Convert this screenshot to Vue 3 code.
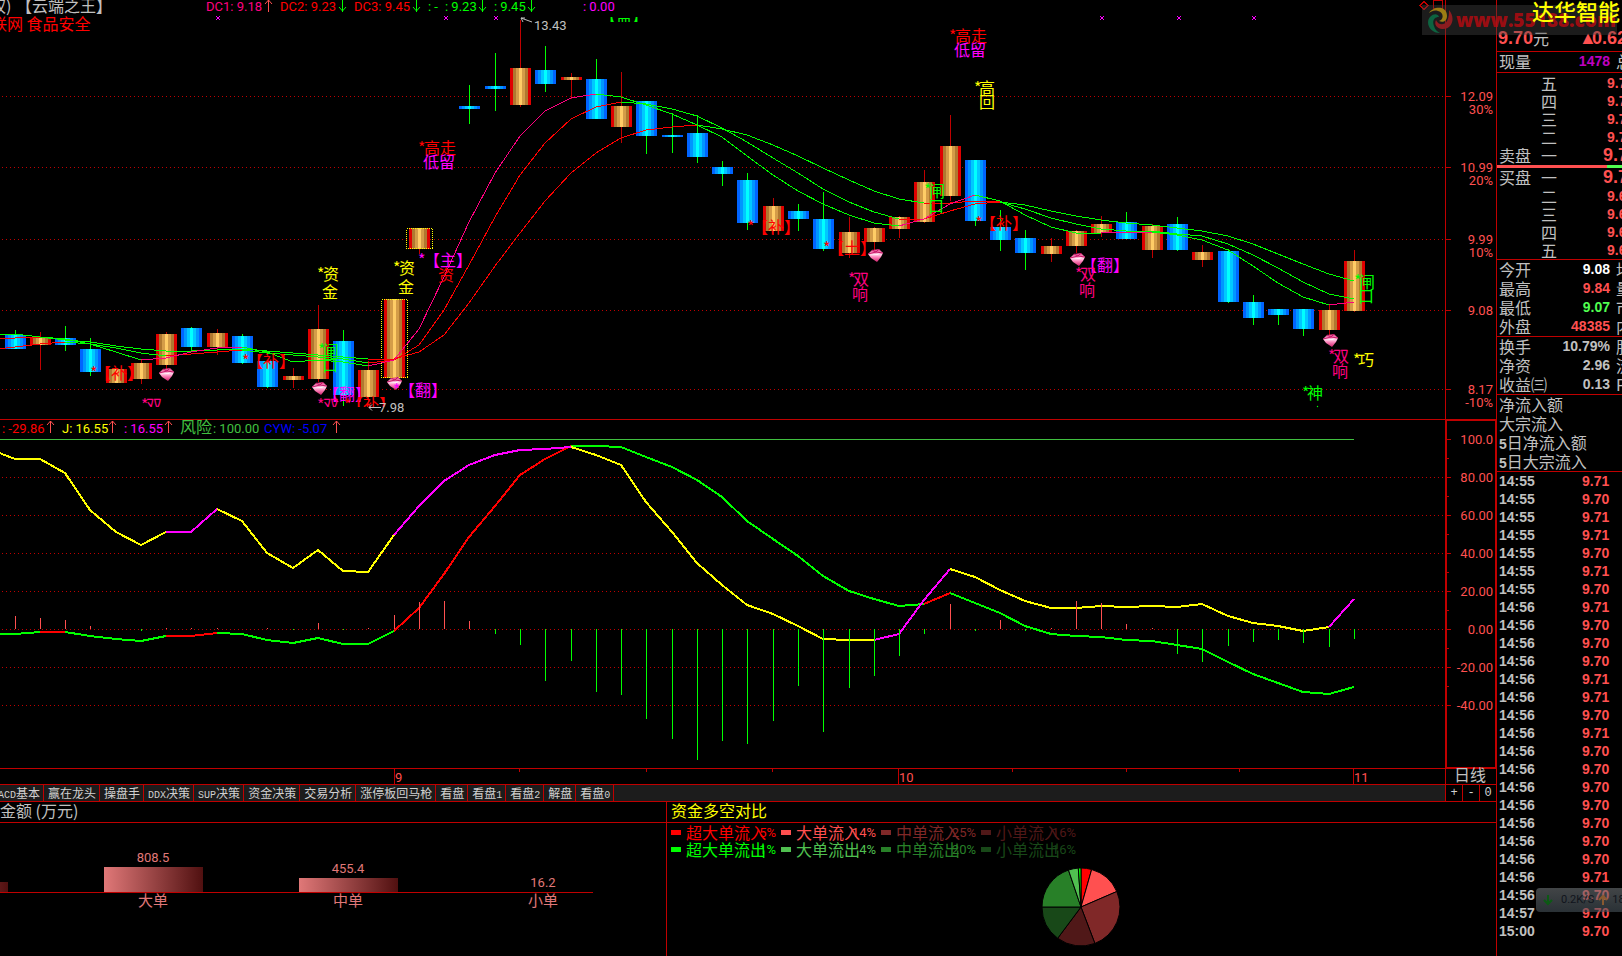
<template>
  <div class="terminal">
    <main class="main">
      <!-- K线主图 -->
      <svg class="chart" viewBox="0 0 1496 419" role="img" aria-label="K线图">
        <defs>
          <linearGradient id="up">
            <stop v-for="(s, i) in bands(upBands)" :key="i" :offset="s.at" :stop-color="s.color" />
          </linearGradient>
          <linearGradient id="down">
            <stop v-for="(s, i) in bands(downBands)" :key="i" :offset="s.at" :stop-color="s.color" />
          </linearGradient>
          <linearGradient id="gem" x1="0" y1="0" x2="0" y2="1">
            <stop offset="0" stop-color="#e0307c" />
            <stop offset="0.45" stop-color="#ffd0e8" />
            <stop offset="0.6" stop-color="#ff8cc0" />
            <stop offset="1" stop-color="#d0206c" />
          </linearGradient>
          <clipPath id="topCut"><rect x="600" y="17" width="50" height="5" /></clipPath>
          <clipPath id="lowCut"><rect x="130" y="390" width="280" height="17" /></clipPath>
        </defs>

        <g class="grid">
          <line v-for="t in priceTicks" :key="t.y" x1="2" x2="1445" :y1="t.y + 0.5" :y2="t.y + 0.5" />
        </g>

        <g class="crisp">
          <g v-for="c in candles" :key="c.x">
            <line :x1="c.x + 0.5" :x2="c.x + 0.5" :y1="c.high" :y2="c.low" :stroke="c.up ? '#c00000' : '#00ff00'" />
            <rect :x="c.x - 10" :y="c.top" width="21" :height="c.bottom - c.top" :fill="c.up ? 'url(#up)' : 'url(#down)'" />
            <rect v-if="c.marked" class="marked" :x="c.x - 12.5" :y="c.top + 0.5" width="26" :height="c.bottom - c.top - 1" />
          </g>
          <polyline v-for="(s, i) in averages" :key="i" :points="s.points" :stroke="s.color" fill="none" />
        </g>

        <g v-for="g in gems" :key="g[0]" :transform="`translate(${g[0]} ${g[1]})`">
          <path d="M0 5 4 1 11 0 15 4 13 8 9 13 3 9Z" fill="url(#gem)" />
          <path d="M4 1 8 3 15 4M8 3 11 0M0 5 8 3" stroke="#c81468" fill="none" />
          <path d="M2 6 10 6 12 4 8 5Z" fill="#fff" opacity="0.7" />
        </g>

        <g class="note">
          <text v-for="(n, i) in notes" :key="i" :x="n[0]" :y="n[1]" :fill="n[3]">{{ n[2] }}</text>
        </g>
        <g class="note" clip-path="url(#lowCut)">
          <text x="141" y="411" fill="#ff0080">*</text>
          <text x="146" y="411" fill="#ff0080">双</text>
          <text x="317" y="411" fill="#ff0080">*</text>
          <text x="323" y="411" fill="#ff0080">双</text>
          <text x="344" y="411" fill="#ff0000">*</text>
          <text x="347" y="410" fill="#ff0000">【补】</text>
        </g>
        <text class="note" x="600" y="22" fill="#00ff00" clip-path="url(#topCut)">【盖】</text>

        <g class="cross">
          <path v-for="x in crosses" :key="x" :d="`M${x} 16l4 4m0 -4l-4 4`" />
        </g>
        <path class="pointer" d="M521 18l11 4M521 18h4M521 18l2 4M369 407.500h12M372 404.500l-3 3l3 3" />
        <text class="num" x="534" y="30" fill="#c0c0c0">13.43</text>
        <text class="num" x="379" y="412" fill="#c0c0c0">7.98</text>
        <circle cx="1317.500" cy="406.500" r="0.700" fill="#00ff00" />

        <path class="frame" d="M1424 1.500l4 4l-4 4l-4 -4zM1433.500 0v8.500h9v-8M1433.500 0.500h9" />
        <line class="frame" x1="1445.500" x2="1445.500" y1="0" y2="419" />
        <g v-for="t in priceTicks" :key="'a' + t.y">
          <line class="frame" x1="1446" x2="1451" :y1="t.y + 0.5" :y2="t.y + 0.5" />
          <text class="num axis" x="1493" :y="t.y + 5">{{ t.price }}</text>
          <text v-if="t.rate" class="num axis" x="1493" :y="t.y + 18">{{ t.rate }}</text>
        </g>

        <text class="note" x="-10" y="12" fill="#c0c0c0">权)</text>
        <text class="note" x="16" y="12" fill="#c0c0c0">【云端之王】</text>
        <text class="note" x="-9" y="30" fill="#ff0000">联网 食品安全</text>
        <g v-for="(l, i) in topLegend" :key="i">
          <text class="num" :x="l.x" y="11" :fill="l.color">{{ l.text }}</text>
          <path v-if="l.arrow" class="arrow" :class="l.arrow" :d="arrowPath(l.ax, 0, l.arrow)" />
        </g>
      </svg>

      <!-- 副图指标 -->
      <svg class="chart" viewBox="0 419 1496 365" role="img" aria-label="指标图">
        <g class="grid">
          <line v-for="t in levelTicks.slice(1)" :key="t.y" x1="2" x2="1445" :y1="t.y + 0.5" :y2="t.y + 0.5" />
        </g>
        <g class="crisp">
          <line x1="0" x2="1496" y1="419.500" y2="419.500" stroke="#c00000" />
          <line x1="0" x2="1354" y1="439.500" y2="439.500" stroke="#40c040" />
          <polyline v-for="(s, i) in oscillators" :key="i" :points="s.points" :stroke="s.color" stroke-width="2" fill="none" />
          <line v-for="b in sticks" :key="b.x" :x1="b.x + 0.5" :x2="b.x + 0.5" y1="629" :y2="b.y" :stroke="b.y < 629 ? '#ff5050' : '#00ff00'" />
          <rect class="box" x="1446" y="420" width="50" height="348" />
          <path class="frame" d="M0 768.500H1496M1445.500 768v16M394.500 768v16M898.500 768v16M1353.500 768v16" />
          <path class="frame" d="M519.500 768v4M646.500 768v4M772.500 768v4M1012.500 768v4M1126.500 768v4M1239.500 768v4" />
          <line v-for="t in levelTicks" :key="'t' + t.y" class="frame" x1="1446" x2="1451" :y1="t.y + 0.5" :y2="t.y + 0.5" />
          <line v-for="t in levelTicks.slice(1)" :key="'h' + t.y" class="frame" x1="1446" x2="1449" :y1="t.y - 18.5" :y2="t.y - 18.5" />
        </g>
        <text v-for="t in levelTicks" :key="'l' + t.y" class="num axis" x="1493" :y="t.y + 5">{{ t.label }}</text>
        <g v-for="(l, i) in subLegend" :key="i">
          <text :class="l.cjk ? 'note' : 'num'" :x="l.x" y="433" :fill="l.color">{{ l.text }}</text>
          <path v-if="l.arrow" class="arrow" :class="l.arrow" :d="arrowPath(l.ax, 421, l.arrow)" />
        </g>
        <text class="num date" x="395" y="782">9</text>
        <text class="num date" x="899" y="782">10</text>
        <text class="num date" x="1354" y="782">11</text>
        <text class="note" x="1454" y="781" fill="#c0c0c0">日线</text>
      </svg>

      <nav class="tabs">
        <div class="tab-list">
          <button v-for="t in tabs" :key="t.join('')" type="button"><span class="half">{{ t[0] }}</span>{{ t[1] }}<span class="half">{{ t[2] }}</span></button>
        </div>
        <div class="zoom-keys">
          <button type="button">+</button>
          <button type="button">-</button>
          <button type="button">0</button>
        </div>
      </nav>

      <div class="panels">
        <section class="panel amount">
          <h2>金额 (万元)</h2>
          <svg viewBox="0 823 666 133" role="img" aria-label="金额 (万元)">
            <defs>
              <linearGradient id="bar">
                <stop offset="0" stop-color="#e07878" />
                <stop offset="1" stop-color="#501010" />
              </linearGradient>
            </defs>
            <rect x="-91" y="882" width="99" height="10" fill="url(#bar)" />
            <g v-for="b in amounts" :key="b.label">
              <rect :x="b.x - 49" :y="b.y" width="99" :height="892 - b.y" fill="url(#bar)" />
              <text class="amount-num" :x="b.x" :y="b.y - 5">{{ b.value }}</text>
              <text class="amount-label" :x="b.x" y="906">{{ b.label }}</text>
            </g>
            <line x1="0" x2="593" y1="892.500" y2="892.500" stroke="#c00000" />
          </svg>
        </section>
        <section class="panel compare">
          <h2>资金多空对比</h2>
          <ul class="flows">
            <li v-for="f in flows" :key="f.name" :style="{ color: f.color }">
              <i :style="{ background: f.color }"></i>
              <span>{{ f.name }}</span>
              <b>{{ f.rate }}</b>
            </li>
          </ul>
          <svg class="pie" viewBox="-40 -40 80 80" role="img" aria-label="资金多空对比">
            <path v-for="s in slices" :key="s.color" :d="s.d" :fill="s.color" />
          </svg>
        </section>
      </div>
    </main>

    <aside class="quote">
      <h1>达华智能</h1>
      <div class="price"><strong>9.70</strong><span>元</span><em><i>▲</i>0.62</em></div>
      <div class="row volume"><span>现量</span><b class="purple">1478</b><span>总</span></div>
      <div class="depth sell">
        <div v-for="(s, i) in sells" :key="i"><span>{{ s[0] }}</span><span>{{ s[1] }}</span><b>{{ s[2] }}</b></div>
      </div>
      <div class="ratio"><i></i></div>
      <div class="depth buy">
        <div v-for="(s, i) in buys" :key="i"><span>{{ s[0] }}</span><span>{{ s[1] }}</span><b>{{ s[2] }}</b></div>
      </div>
      <div v-for="(group, g) in stats" :key="g" class="stats">
        <div v-for="s in group" :key="s[0]" class="row"><span>{{ s[0] }}</span><b :class="s[2]">{{ s[1] }}</b><span>{{ s[3] }}</span></div>
      </div>
      <div class="stats">
        <div class="row"><span>净流入额</span></div>
        <div class="row"><span>大宗流入</span></div>
        <div class="row"><span><b>5</b>日净流入额</span></div>
        <div class="row"><span><b>5</b>日大宗流入</span></div>
      </div>
      <table class="ticks">
        <tbody>
          <tr v-for="(t, i) in trades" :key="i"><td>{{ t.time }}</td><td class="red">{{ t.price }}</td></tr>
        </tbody>
      </table>
    </aside>

    <div class="watermark">
      <svg viewBox="0 0 28 28" aria-hidden="true">
        <path d="M3 7C7 0 21 -1 21 10C21 15 17 17 13 15C18 14 18 6 12 5C8 4 6 5 3 7Z" fill="#9c7d14" />
        <path d="M23 4C30 12 26 24 16 23C10 22 8 18 10 14C12 19 18 20 21 15C23 11 23 8 23 4Z" fill="#8c1c20" />
        <path d="M14 27C4 27 -1 17 4 11C8 7 12 8 13 11C8 11 6 15 8 20C9 24 12 26 14 27Z" fill="#0d6440" />
      </svg>
      <span>www.55188.com</span>
    </div>
    <div class="net">
      <svg viewBox="0 0 10 12" aria-hidden="true"><path d="M5 1v9M1 6l4 4l4 -4" stroke="#0c5a14" stroke-width="2" fill="none" /></svg>
      <span>0.2K/S</span>
      <svg viewBox="0 0 10 12" aria-hidden="true"><path d="M5 11v-9M1 6l4 -4l4 4" stroke="#8a5a30" stroke-width="2" fill="none" /></svg>
      <span>18</span>
    </div>
  </div>
</template>

<script setup>
const RED = '#ff0000'
const PINK = '#ff0080'
const GREEN = '#00ff00'
const MAGENTA = '#ff00ff'
const YELLOW = '#ffff00'

// 第 i 根K线的横坐标
const xAt = i => Math.floor(15.1 + i * 25.27)

const upBands = ['#e00000', '#b07830', '#d49c48', '#ffcc66', '#d49c48', '#b07830', '#e00000']
const downBands = ['#0064ff', '#0096ff', '#00c8ff', '#00ffff', '#00c8ff', '#0096ff', '#0064ff']

function bands(colors) {
  return colors.flatMap((color, i) => [
    { at: i / colors.length, color },
    { at: (i + 1) / colors.length, color }
  ])
}

// [序号, 最高, 实体上沿, 实体下沿, 最低, 涨]
const candleData = [
  [0, 330, 335, 349, 349, 0], [1, 332, 337, 345, 370, 1], [2, 326, 338, 345, 351, 0],
  [3, 338, 349, 372, 376, 0], [4, 369, 369, 383, 383, 1], [5, 359, 363, 379, 384, 1],
  [6, 332, 334, 365, 369, 1], [7, 327, 328, 347, 351, 0], [8, 329, 333, 347, 355, 1],
  [9, 334, 336, 363, 364, 0], [10, 361, 361, 387, 388, 0], [11, 368, 376, 380, 388, 1],
  [12, 305, 329, 379, 382, 1], [13, 330, 341, 395, 406, 0], [14, 361, 370, 397, 402, 1],
  [15, 299, 299, 378, 378, 1], [16, 228, 228, 249, 254, 1], [18, 85, 106, 109, 124, 0],
  [19, 53, 86, 89, 111, 0], [20, 20, 68, 105, 107, 1], [21, 46, 70, 84, 92, 0],
  [22, 73, 77, 80, 99, 1], [23, 59, 79, 119, 119, 0], [24, 72, 106, 127, 143, 1],
  [25, 101, 101, 136, 154, 0], [26, 113, 135, 137, 153, 0], [27, 115, 133, 157, 163, 0],
  [28, 161, 167, 174, 186, 0], [29, 173, 180, 223, 230, 0], [30, 198, 206, 231, 235, 1],
  [31, 204, 211, 219, 231, 0], [32, 192, 219, 249, 251, 0], [33, 217, 232, 253, 258, 1],
  [34, 227, 228, 242, 250, 1], [35, 216, 217, 229, 238, 1], [36, 170, 182, 222, 223, 1],
  [37, 115, 146, 196, 201, 1], [38, 160, 160, 221, 226, 0], [39, 210, 227, 240, 251, 0],
  [40, 230, 238, 253, 270, 0], [41, 238, 246, 254, 262, 1], [42, 230, 231, 246, 253, 1],
  [43, 216, 224, 233, 237, 1], [44, 212, 222, 239, 239, 0], [45, 224, 226, 250, 258, 1],
  [46, 217, 224, 250, 251, 0], [47, 245, 252, 260, 267, 1], [48, 249, 251, 302, 303, 0],
  [49, 295, 302, 318, 325, 0], [50, 309, 309, 315, 325, 0], [51, 309, 309, 329, 336, 0],
  [52, 305, 310, 330, 335, 1], [53, 250, 261, 311, 312, 1]
]
const candles = candleData.map(([i, high, top, bottom, low, up]) => ({
  x: xAt(i), high, top, bottom, low, up, marked: i === 15 || i === 16
}))

// 折线按涨跌区间拆成不同颜色的线段
function split(values, base, ranges) {
  const colorAt = i => (ranges.find(r => i >= r[0] && i <= r[1]) || [0, 0, base])[2]
  const out = []
  for (let k = 1; k < values.length; k++) {
    const color = colorAt(k - 1)
    const end = `${xAt(k - 1)},${values[k]}`
    const last = out[out.length - 1]
    if (last && last.color === color) last.points += ' ' + end
    else out.push({ color, points: `${xAt(k - 2)},${values[k - 1]} ${end}` })
  }
  return out
}

const slow = [334, 334, 337, 340, 342, 346, 349, 351, 351, 350, 349, 351, 353, 355, 357, 359, 359, 352, 335, 303, 266, 233, 201, 173, 153, 138, 130, 127, 125, 129, 135, 145, 156, 168, 180, 191, 199, 203, 203, 201, 202, 205, 211, 216, 220, 223, 225, 228, 231, 236, 244, 254, 264, 274, 281]
const mid = [339, 338, 337, 339, 344, 348, 353, 356, 354, 352, 350, 353, 355, 357, 359, 363, 360, 345, 310, 265, 217, 175, 143, 119, 107, 102, 104, 109, 116, 128, 142, 158, 173, 189, 202, 212, 219, 219, 211, 204, 202, 209, 218, 224, 229, 231, 231, 234, 236, 244, 255, 268, 282, 294, 299]
const fast = [350, 347, 344, 342, 344, 352, 360, 358, 352, 348, 347, 352, 362, 360, 362, 366, 360, 329, 277, 222, 173, 136, 111, 98, 94, 97, 105, 114, 125, 137, 156, 175, 191, 204, 215, 223, 226, 219, 204, 195, 201, 215, 227, 233, 233, 232, 232, 235, 240, 250, 266, 283, 297, 305, 302]
const averages = [
  ...split(slow, GREEN, [[15, 27, RED], [37, 39, RED]]),
  ...split(mid, GREEN, [[0, 1, RED], [7, 9, RED], [15, 24, RED], [36, 39, RED]]),
  ...split(fast, GREEN, [[0, 2, RED], [6, 9, PINK], [15, 23, PINK], [36, 38, PINK], [44, 45, PINK], [53, 53, PINK]])
]

const jLine = [449, 459, 459, 473, 510, 532, 545, 532, 532, 509, 521, 553, 568, 550, 571, 572, 535, 506, 481, 465, 455, 450, 449, 447, 455, 465, 502, 532, 563, 585, 605, 614, 626, 639, 640, 640, 634, 600, 569, 577, 590, 601, 608, 608, 606, 607, 606, 607, 604, 616, 623, 626, 631, 627, 599]
const trend = [634, 634, 632, 632, 636, 639, 641, 636, 636, 633, 634, 640, 643, 638, 644, 644, 631, 608, 574, 537, 506, 475, 459, 446, 446, 447, 457, 467, 480, 497, 521, 539, 556, 576, 591, 599, 606, 604, 593, 603, 613, 626, 634, 636, 637, 640, 641, 645, 649, 662, 674, 683, 692, 694, 687]
const oscillators = [
  ...split(trend, GREEN, [[2, 2, RED], [7, 8, RED], [16, 22, RED], [37, 37, RED]]),
  ...split(jLine, YELLOW, [[7, 8, MAGENTA], [16, 22, MAGENTA], [35, 37, MAGENTA], [53, 53, MAGENTA]])
]

const stickData = [616, 618, 620, 626, 629, 631, 628, 628, 628, 629, 628, 630, 623, 630, 628, 615, 602, 601, 621, 634, 645, 681, 661, 692, 695, 719, 739, 760, 741, 744, 721, 686, 732, 688, 676, 656, 634, 604, 631, 620, 631, 628, 601, 603, 624, 628, 654, 662, 646, 642, 640, 643, 647, 639]
const sticks = stickData.map((y, i) => ({ x: xAt(i), y }))

const gems = [[159, 368], [312, 382], [387, 377], [868, 249], [1070, 253], [1323, 334]]
const crosses = [216, 444, 494, 1100, 1177, 1252]

const notes = [
  [418, 154, '*', RED], [424, 154, '高走', RED], [423, 168, '低留', MAGENTA],
  [949, 42, '*', RED], [955, 42, '高走', RED], [954, 56, '低留', MAGENTA],
  [974, 94, '*', YELLOW], [979, 94, '高', YELLOW], [979, 108, '回', YELLOW],
  [317, 280, '*', YELLOW], [323, 280, '资', YELLOW], [322, 298, '金', YELLOW],
  [393, 274, '*', YELLOW], [399, 274, '资', YELLOW], [398, 293, '金', YELLOW],
  [418, 266, '*', MAGENTA], [424, 266, '【主】', MAGENTA], [438, 281, '资', RED],
  [393, 396, '*', MAGENTA], [399, 396, '【翻】', MAGENTA],
  [323, 400, '【翻】', MAGENTA], [1081, 271, '【翻】', MAGENTA],
  [90, 379, '*', RED], [95, 379, '【补】', RED],
  [242, 367, '*', RED], [247, 367, '【补】', RED],
  [747, 233, '*', RED], [752, 233, '【补】', RED],
  [823, 254, '*', RED], [828, 254, '【土】', RED],
  [975, 229, '*', RED], [980, 229, '【补】', RED],
  [318, 356, '*', GREEN], [323, 357, '闸', GREEN], [322, 371, '口', GREEN],
  [924, 196, '*', GREEN], [929, 197, '闸', GREEN], [928, 212, '口', GREEN],
  [1354, 287, '*', GREEN], [1359, 288, '闸', GREEN], [1358, 302, '口', GREEN],
  [848, 285, '*', PINK], [853, 285, '双', PINK], [852, 300, '响', PINK],
  [1075, 280, '*', PINK], [1080, 280, '双', PINK], [1079, 296, '响', PINK],
  [1328, 362, '*', PINK], [1333, 362, '双', PINK], [1332, 377, '响', PINK],
  [1353, 366, '*', YELLOW], [1358, 366, '巧', YELLOW],
  [1302, 399, '*', GREEN], [1307, 399, '神', GREEN]
]

const priceTicks = [
  { y: 96, price: '12.09', rate: '30%' },
  { y: 167, price: '10.99', rate: '20%' },
  { y: 239, price: '9.99', rate: '10%' },
  { y: 310, price: '9.08' },
  { y: 389, price: '8.17', rate: '-10%' }
]
const levelTicks = ['100.0', '80.00', '60.00', '40.00', '20.00', '0.00', '-20.00', '-40.00']
  .map((label, i) => ({ label, y: 439 + i * 38 }))

const topLegend = [
  { x: 206, text: 'DC1: 9.18', color: PINK, arrow: 'rise', ax: 268 },
  { x: 280, text: 'DC2: 9.23', color: RED, arrow: 'fall', ax: 342 },
  { x: 354, text: 'DC3: 9.45', color: RED, arrow: 'fall', ax: 416 },
  { x: 428, text: ': -', color: GREEN },
  { x: 445, text: ': 9.23', color: GREEN, arrow: 'fall', ax: 482 },
  { x: 494, text: ': 9.45', color: GREEN, arrow: 'fall', ax: 531 },
  { x: 583, text: ': 0.00', color: MAGENTA }
]
const subLegend = [
  { x: 2, text: ': -29.86', color: RED, arrow: 'rise', ax: 50 },
  { x: 62, text: 'J: 16.55', color: YELLOW, arrow: 'rise', ax: 112 },
  { x: 124, text: ': 16.55', color: MAGENTA, arrow: 'rise', ax: 168 },
  { x: 180, text: '风险', color: '#40c040', cjk: true },
  { x: 213, text: ': 100.00', color: '#40c040' },
  { x: 264, text: 'CYW: -5.07', color: '#0000ff', arrow: 'rise', ax: 336 }
]

function arrowPath(x, y, dir) {
  return dir === 'rise'
    ? `M${x + 0.5} ${y + 12}V${y}M${x - 3} ${y + 4}l3.500 -4l3.500 4`
    : `M${x + 0.5} ${y}V${y + 12}M${x - 3} ${y + 7}l3.500 4l3.500 -4`
}

const tabs = [
  ['MACD', '基本', ''], ['', '赢在龙头', ''], ['', '操盘手', ''], ['DDX', '决策', ''],
  ['SUP', '决策', ''], ['', '资金决策', ''], ['', '交易分析', ''], ['', '涨停板回马枪', ''],
  ['', '看盘', ''], ['', '看盘', '1'], ['', '看盘', '2'], ['', '解盘', ''], ['', '看盘', '0']
]

const amounts = [
  { label: '大单', value: '808.5', x: 153, y: 867 },
  { label: '中单', value: '455.4', x: 348, y: 878 },
  { label: '小单', value: '16.2', x: 543, y: 892 }
]

const flows = [
  { name: '超大单流入', rate: '5%', color: '#ff0000' },
  { name: '大单流入', rate: '14%', color: '#ff5050' },
  { name: '中单流入', rate: '25%', color: '#802828' },
  { name: '小单流入', rate: '16%', color: '#501818' },
  { name: '超大单流出', rate: '1%', color: '#00ff00' },
  { name: '大单流出', rate: '4%', color: '#50c050' },
  { name: '中单流出', rate: '20%', color: '#288028' },
  { name: '小单流出', rate: '16%', color: '#184818' }
]

const pieStops = [
  [0, '#ff0000'], [4.4, '#ff5050'], [18.5, '#802828'], [44.2, '#501818'],
  [60.2, '#184818'], [75, '#288028'], [94.8, '#50c050'], [98.9, '#00ff00'], [100, '']
]
const slices = pieStops.slice(0, -1).map(([from, color], i) => {
  const point = p => {
    const a = (p / 100) * Math.PI * 2
    return `${(39 * Math.sin(a)).toFixed(2)} ${(-39 * Math.cos(a)).toFixed(2)}`
  }
  return { color, d: `M0 0L${point(from)}A39 39 0 0 1 ${point(pieStops[i + 1][0])}Z` }
})

const sells = [['', '五', '9.75'], ['', '四', '9.74'], ['', '三', '9.73'], ['', '二', '9.72'], ['卖盘', '一', '9.71']]
const buys = [['买盘', '一', '9.70'], ['', '二', '9.69'], ['', '三', '9.68'], ['', '四', '9.67'], ['', '五', '9.66']]
const stats = [
  [['今开', '9.08', 'white', '均'], ['最高', '9.84', 'red', '量'], ['最低', '9.07', 'green', '市'], ['外盘', '48385', 'red', '内']],
  [['换手', '10.79%', '', '股'], ['净资', '2.96', '', '流'], ['收益㈢', '0.13', '', 'PE']]
]

const lastDigits = '10110101000110100000001000'
const trades = [...lastDigits].map((d, i) => ({
  time: i < 7 ? '14:55' : i < 24 ? '14:56' : i === 24 ? '14:57' : '15:00',
  price: '9.7' + d
}))
</script>

<style>
body {
  margin: 0;
  background: #000;
}
</style>

<style scoped>
.terminal {
  position: relative;
  display: grid;
  grid-template-columns: minmax(0, 1fr) 126px;
  min-height: 100vh;
  overflow: hidden;
  background: #000;
  color: #c0c0c0;
  font-family: "Liberation Sans", "Noto Sans CJK SC", sans-serif;
  font-size: 16px;
}

.main {
  display: flex;
  flex-direction: column;
}

.chart {
  display: block;
  width: 100%;
}

.grid line {
  stroke: #c00000;
  stroke-dasharray: 1 3;
  shape-rendering: crispEdges;
}

.crisp,
.frame {
  shape-rendering: crispEdges;
}

.frame {
  stroke: #c00000;
  fill: none;
}

.box {
  stroke: #c00000;
  stroke-width: 2;
  fill: none;
}

.marked {
  stroke: #ffff00;
  stroke-dasharray: 1 1;
  fill: none;
}

.note {
  font-family: "Noto Sans CJK SC", sans-serif;
  font-size: 16px;
}

.num {
  font-family: Roboto, sans-serif;
  font-size: 13px;
}

.axis {
  fill: #ff5050;
  text-anchor: end;
}

.date {
  fill: #ff5050;
}

.cross path {
  stroke: #ff00ff;
  fill: none;
}

.pointer {
  stroke: #c0c0c0;
  fill: none;
}

.arrow {
  fill: none;
}

.arrow.rise {
  stroke: #ff5050;
}

.arrow.fall {
  stroke: #00ff00;
}

/* 页签 */
.tabs {
  display: flex;
  height: 16px;
  border-top: 1px solid #c00000;
  background: #1c1c1c;
}

.tab-list {
  display: flex;
  flex: 1;
  min-width: 0;
  margin-left: -12px;
}

.tabs button {
  margin: 0;
  padding: 0 4px;
  border: 0;
  border-right: 1px solid #c00000;
  background: transparent;
  color: #d0d0d0;
  font-family: "Noto Sans CJK SC", sans-serif;
  font-size: 12px;
  line-height: 16px;
  white-space: nowrap;
}

.tabs .tab-list button {
  flex: none;
  padding: 0 3px 0 4px;
}

.tabs .half {
  font-family: "Liberation Mono", monospace;
  font-size: 10px;
}

.zoom-keys {
  display: flex;
  width: 50px;
  border-left: 1px solid #c00000;
  background: #000;
}

.tabs .zoom-keys button {
  flex: 1;
  font-family: "Liberation Mono", monospace;
}

.tabs .zoom-keys button:last-child {
  border-right: 0;
}

/* 资金面板 */
.panels {
  display: flex;
  flex: 1;
  border-top: 1px solid #c00000;
}

.panel h2 {
  height: 20px;
  margin: 0;
  border-bottom: 1px solid #c00000;
  font-family: "Noto Sans CJK SC", sans-serif;
  font-size: 16px;
  font-weight: 400;
  line-height: 17px;
}

.amount {
  width: 666px;
}

.amount svg {
  display: block;
  width: 100%;
}

.amount-num,
.amount-label {
  fill: #e07878;
  text-anchor: middle;
}

.amount-num {
  font-family: Roboto, sans-serif;
  font-size: 13px;
}

.amount-label {
  font-family: "Noto Sans CJK SC", sans-serif;
  font-size: 15px;
}

.compare {
  flex: 1;
  border-left: 1px solid #c00000;
}

.compare h2 {
  padding-left: 4px;
  color: #ffff00;
}

.flows {
  display: grid;
  grid-template-columns: 110px 100px 100px 100px;
  margin: 0;
  padding: 1px 0 0 4px;
  list-style: none;
}

.flows li {
  display: flex;
  align-items: center;
  height: 17px;
  font-family: "Noto Sans CJK SC", sans-serif;
  line-height: 17px;
  white-space: nowrap;
}

.flows i {
  flex: none;
  width: 10px;
  height: 5px;
  margin-right: 5px;
}

.flows span {
  width: 0;
}

.flows b {
  margin: 0 5px 0 auto;
  font-family: Roboto, sans-serif;
  font-size: 13px;
  font-weight: 400;
}

.pie {
  display: block;
  width: 80px;
  margin: 9px 0 0 374px;
}

.pie path {
  stroke: #000;
}

/* 右侧报价 */
.quote {
  min-width: 0;
  overflow: hidden;
  border-left: 1px solid #c00000;
  font-family: "Noto Sans CJK SC", sans-serif;
}

.quote b {
  font-family: "Liberation Sans", sans-serif;
  font-size: 14px;
  font-weight: 700;
}

.quote h1 {
  position: relative;
  z-index: 2;
  height: 22px;
  margin: 0 0 0 35px;
  color: #ffff00;
  font-size: 22px;
  font-weight: 500;
  line-height: 20px;
  white-space: nowrap;
}

.price {
  display: flex;
  height: 29px;
  border-bottom: 1px solid #c00000;
  line-height: 33px;
  white-space: nowrap;
}

.price strong,
.price em {
  color: #ff5050;
  font-family: "Liberation Sans", sans-serif;
  font-size: 18px;
  font-style: normal;
  font-weight: 700;
}

.price strong {
  width: 35px;
  padding-left: 1px;
}

.price em {
  display: flex;
  margin-left: 30px;
}

.price i {
  width: 13px;
  font-size: 18px;
  font-style: normal;
}

.row {
  display: flex;
  height: 19px;
  padding-left: 2px;
  line-height: 19px;
  white-space: nowrap;
}

.row > b {
  flex: 1;
  text-align: right;
}

.row > b + span {
  flex: none;
  width: 6px;
  margin-left: 6px;
}

.volume {
  height: 20px;
  border-bottom: 1px solid #c00000;
}

.purple {
  color: #c000c0;
}

.red {
  color: #ff5050;
}

.green {
  color: #50ff50;
}

.white {
  color: #fff;
}

.depth {
  padding-left: 2px;
}

.depth div {
  display: grid;
  grid-template-columns: 42px 66px 40px;
  height: 18px;
  line-height: 18px;
}

.depth b {
  color: #ff5050;
}

.sell {
  padding-top: 1px;
  padding-bottom: 1px;
}

.sell div:last-child b,
.buy div:first-child b {
  margin-left: -4px;
  font-size: 18px;
}

.ratio {
  height: 3px;
  background: #50ff50;
}

.ratio i {
  display: block;
  width: 110px;
  height: 3px;
  background: #ff5050;
}

.buy {
  border-bottom: 1px solid #c00000;
}

.buy div:first-child {
  height: 19px;
}

.stats {
  border-bottom: 1px solid #c00000;
}

.ticks {
  border-collapse: collapse;
  margin: 0;
  font-family: "Liberation Sans", sans-serif;
  font-size: 14px;
  font-weight: 700;
  line-height: 18px;
}

.ticks td {
  padding: 0 0 0 2px;
}

.ticks td:first-child {
  width: 81px;
}

/* 浮层 */
.watermark {
  position: absolute;
  top: 5px;
  right: 5px;
  display: flex;
  align-items: center;
  width: 195px;
  height: 30px;
  background: rgba(70, 70, 70, 0.4);
  color: rgba(190, 10, 16, 0.8);
  font-family: "Open Sans", sans-serif;
  font-size: 19px;
  font-weight: 800;
}

.watermark svg {
  width: 28px;
  height: 28px;
  margin: 0 2px 0 4px;
}

.net {
  position: absolute;
  right: 0;
  bottom: 44px;
  display: flex;
  align-items: center;
  gap: 4px;
  width: 79px;
  height: 24px;
  padding-left: 7px;
  overflow: hidden;
  border-radius: 4px 0 0 4px;
  background: linear-gradient(rgba(110, 115, 118, 0.6), rgba(70, 82, 90, 0.6));
  color: #10141c;
  font-family: Roboto, sans-serif;
  font-size: 11px;
  line-height: 24px;
  white-space: nowrap;
}

.net svg {
  flex: none;
  width: 10px;
  height: 12px;
}

.net svg:first-child {
  margin-right: 4px;
}
</style>
